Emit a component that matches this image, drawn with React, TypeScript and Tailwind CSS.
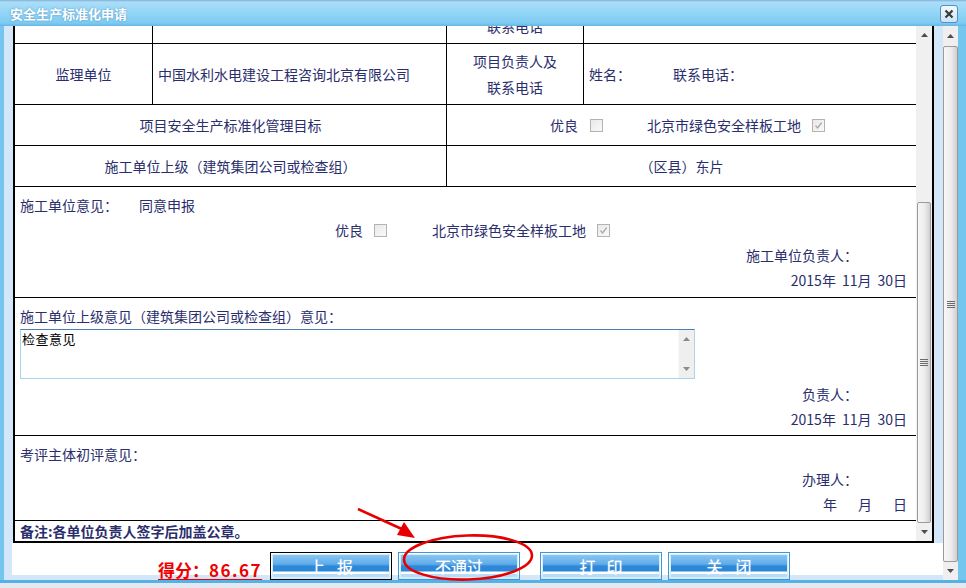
import React from "react";

const Box = ({ checked, className = "" }: { checked?: boolean; className?: string }) => (
  <span
    className={
      "inline-flex w-[13px] h-[13px] shrink-0 items-center justify-center border border-[#b3b3b3] bg-[linear-gradient(135deg,#e9e9e9,#f9f9f9)] " +
      className
    }
  >
    {checked && (
      <svg width="9" height="9" viewBox="0 0 9 9">
        <path d="M1.5 4.6 L3.6 7 L7.6 1.6" fill="none" stroke="#a8a8a8" strokeWidth="1.4" />
      </svg>
    )}
  </span>
);

const Up = ({ c = "#4d4d4d" }: { c?: string }) => (
  <svg width="7" height="4" viewBox="0 0 7 4">
    <path d="M0 4 L3.5 0 L7 4Z" fill={c} />
  </svg>
);
const Down = ({ c = "#4d4d4d" }: { c?: string }) => (
  <svg width="7" height="4" viewBox="0 0 7 4">
    <path d="M0 0 L3.5 4 L7 0Z" fill={c} />
  </svg>
);

const Grip = () => (
  <svg width="8" height="7" viewBox="0 0 8 7">
    <rect x="0" y="0" width="8" height="1" fill="#6b6b6b" />
    <rect x="0" y="2" width="8" height="1" fill="#6b6b6b" />
    <rect x="0" y="4" width="8" height="1" fill="#6b6b6b" />
    <rect x="0" y="6" width="8" height="1" fill="#6b6b6b" />
  </svg>
);

const Thumb = ({ className = "" }: { className?: string }) => (
  <div
    className={
      "rounded-[2px] border border-[#9a9a9a] bg-[linear-gradient(to_right,#f7f7f7,#ececec_55%,#cfcfcf)] flex items-center justify-center " +
      className
    }
  >
    <Grip />
  </div>
);

const DateText = () => (
  <div className="flex items-center gap-[6px]">
    <span>2015年</span>
    <span>11月</span>
    <span>30日</span>
  </div>
);

const Btn = ({ chars, dark, gap = "gap-[12px]" }: { chars: string[]; dark?: boolean; gap?: string }) => (
  <div
    className={
      "w-[122px] h-[28px] mt-[9px] border p-px " + (dark ? "border-black" : "border-[#3a98e0]")
    }
  >
    <div
      className={
        "w-full h-full flex items-center justify-center text-white text-[16px] leading-none border border-[#d9ecfb] bg-[linear-gradient(to_bottom,#8ac6f1_0%,#5eabea_42%,#2e8ad9_50%,#2a86d6_74%,#ffffff_76%,#ffffff_86%,#b8dbf6_88%,#b8dbf6_100%)] " +
        gap
      }
    >
      {chars.map((c, i) => (
        <span key={i} className="[text-shadow:0_0_1px_rgba(255,255,255,0.6)]">
          {c}
        </span>
      ))}
    </div>
  </div>
);

export default function App() {
  return (
    <div className="relative w-[966px] h-[588px] overflow-hidden bg-[#e3e9ee] font-['Noto_Sans_CJK_SC','Noto_Sans',sans-serif] text-[14px] text-[#2a2e6c]">
      <div className="flex flex-col h-[583px] bg-[#74c6ef] border-b-[3px] border-[#58b1e6]">
        {/* title bar */}
        <div className="h-[26px] flex items-center justify-between pl-[10px] pr-[8px] bg-[linear-gradient(to_bottom,#86aed3_0px,#aadef8_2px,#94d6f6_12px,#7ecbf2_23px,#63b6e4_26px)]">
          <span className="text-white font-bold text-[13px] leading-none [text-shadow:0_0_2px_rgba(40,100,160,0.6)]">
            安全生产标准化申请
          </span>
          <div className="mt-[2px] w-[18px] h-[18px] rounded-[3px] border border-[#5b8ebc] bg-[linear-gradient(to_bottom,#f1f9fe,#cbe5f6)] flex items-center justify-center">
            <svg width="10" height="10" viewBox="0 0 10 10">
              <path d="M1.5 1.5 L8.5 8.5 M8.5 1.5 L1.5 8.5" stroke="#3a3a3a" strokeWidth="2.2" />
            </svg>
          </div>
        </div>

        {/* main */}
        <div className="flex h-[554px]">
          <div className="w-[4px]" />
          <div className="w-[939px] flex flex-col bg-[#d4e7fa]">
            <div className="flex h-[517px]">
              <div className="w-[9px]" />
              <div className="w-[921px] border-x-2 border-b-2 border-black flex bg-white">
                {/* table viewport */}
                <div className="w-[901px] h-[515px] overflow-hidden">
                  <div className="-mt-[13px] flex flex-col">
                    {/* Row A */}
                    <div className="flex h-[31px] border-b border-black">
                      <div className="w-[138px] border-r border-black" />
                      <div className="w-[294px] border-r border-black" />
                      <div className="w-[137px] border-r border-black flex items-center justify-center pb-[4px]">
                        联系电话
                      </div>
                      <div className="flex-1" />
                    </div>
                    {/* Row B */}
                    <div className="flex h-[61px] border-b border-black">
                      <div className="w-[138px] border-r border-black flex items-center justify-center">监理单位</div>
                      <div className="w-[294px] border-r border-black flex items-center pl-[5px]">
                        中国水利水电建设工程咨询北京有限公司
                      </div>
                      <div className="w-[137px] border-r border-black flex flex-col items-center justify-center leading-[26px]">
                        <span>项目负责人及</span>
                        <span>联系电话</span>
                      </div>
                      <div className="flex-1 flex items-center pl-[5px]">
                        <span className="w-[84px]">姓名：</span>
                        <span>联系电话：</span>
                      </div>
                    </div>
                    {/* Row C */}
                    <div className="flex h-[41px] border-b border-black">
                      <div className="w-[432px] border-r border-black flex items-center justify-center">
                        项目安全生产标准化管理目标
                      </div>
                      <div className="flex-1 flex items-center pl-[103px]">
                        <span>优良</span>
                        <Box className="ml-[12px]" />
                        <span className="ml-[44px]">北京市绿色安全样板工地</span>
                        <Box checked className="ml-[11px]" />
                      </div>
                    </div>
                    {/* Row D */}
                    <div className="flex h-[41px] border-b border-black">
                      <div className="w-[432px] border-r border-black flex items-center justify-center">
                        施工单位上级（建筑集团公司或检查组）
                      </div>
                      <div className="flex-1 flex items-center justify-center">（区县）东片</div>
                    </div>
                    {/* Row E */}
                    <div className="flex flex-col h-[111px] border-b border-black pt-[6px] pl-[5px] pr-[9px]">
                      <div className="flex h-[25px] items-center">
                        <span className="w-[119px]">施工单位意见：</span>
                        <span>同意申报</span>
                      </div>
                      <div className="flex h-[25px] items-center pl-[315px]">
                        <span>优良</span>
                        <Box className="ml-[11px]" />
                        <span className="ml-[45px]">北京市绿色安全样板工地</span>
                        <Box checked className="ml-[11px]" />
                      </div>
                      <div className="flex h-[25px] items-center justify-end pr-[49px]">施工单位负责人：</div>
                      <div className="flex h-[25px] items-center justify-end">
                        <DateText />
                      </div>
                    </div>
                    {/* Row F */}
                    <div className="flex flex-col h-[138px] border-b border-black pt-[6px] pl-[5px] pr-[9px]">
                      <div className="flex h-[25px] items-center">施工单位上级意见（建筑集团公司或检查组）意见：</div>
                      <div className="w-[675px] h-[50px] border border-[#a9d4eb] border-t-[#4d7eb0] bg-white flex">
                        <div className="flex-1 pl-[1px] pt-[1px] text-black text-[13px] leading-[15px] tracking-[0.5px]">
                          检查意见
                        </div>
                        <div className="w-[16px] bg-[#efefef] border-l border-[#f7f7f7] flex flex-col items-center justify-between pt-[7px] pb-[7px]">
                          <Up c="#8a8a8a" />
                          <Down c="#8a8a8a" />
                        </div>
                      </div>
                      <div className="mt-[3px] flex h-[25px] items-center justify-end pr-[49px]">负责人：</div>
                      <div className="flex h-[25px] items-center justify-end">
                        <DateText />
                      </div>
                    </div>
                    {/* Row G */}
                    <div className="flex flex-col h-[85px] border-b border-black pt-[6px] pl-[5px] pr-[9px]">
                      <div className="flex h-[25px] items-center">考评主体初评意见：</div>
                      <div className="flex h-[25px] items-center justify-end pr-[49px]">办理人：</div>
                      <div className="flex h-[25px] items-center justify-end gap-[21px]">
                        <span>年</span>
                        <span>月</span>
                        <span>日</span>
                      </div>
                    </div>
                    {/* Row H */}
                    <div className="flex h-[20px] items-center pl-[5px] font-bold">
                      备注:各单位负责人签字后加盖公章。
                    </div>
                  </div>
                </div>
                {/* inner scrollbar */}
                <div className="w-[16px] h-[515px] flex flex-col bg-[#f0f0f0]">
                  <div className="h-[18px] flex items-center justify-center">
                    <Up />
                  </div>
                  <div className="h-[158px]" />
                  <Thumb className="h-[321px] mx-px" />
                  <div className="h-[18px] flex items-center justify-center">
                    <Down />
                  </div>
                </div>
              </div>
              <div className="w-[9px]" />
            </div>
            {/* button row */}
            <div className="flex h-[37px]">
              <div className="w-[8px]" />
              <div className="flex-1 flex items-start bg-[linear-gradient(to_bottom,#ffffff_32px,#d3e7f9_32px)]">
                <span className="ml-[146px] w-[112px] mt-[18px] text-[17px] leading-[18px] font-bold text-[#f00000] underline underline-offset-[2px]">
                  得分：<span className="tracking-[1.5px]">86.67</span>
                </span>
                <Btn chars={["上", "报"]} dark />
                <div className="ml-[6px]">
                  <Btn chars={["不通过"]} />
                </div>
                <div className="ml-[20px]">
                  <Btn chars={["打", "印"]} gap="gap-[11px]" />
                </div>
                <div className="ml-[6px]">
                  <Btn chars={["关", "闭"]} gap="gap-[13px]" />
                </div>
              </div>
            </div>
          </div>
          {/* outer scrollbar */}
          <div className="w-[15px] h-[554px] flex flex-col bg-[#efefef]">
            <div className="h-[20px] flex items-center justify-center">
              <Up />
            </div>
            <Thumb className="h-[516px]" />
            <div className="h-[18px] flex items-center justify-center">
              <Down />
            </div>
          </div>
          <div className="w-[8px]" />
        </div>
      </div>

      {/* red annotation overlay */}
      <svg className="absolute inset-0 pointer-events-none" width="966" height="588" viewBox="0 0 966 588">
        <ellipse cx="468" cy="557.5" rx="64" ry="22" fill="none" stroke="#e80000" strokeWidth="2.6" transform="rotate(-2 468 557.5)" />
        <line x1="358" y1="509" x2="404" y2="530" stroke="#e80000" strokeWidth="2.6" />
        <path d="M404 522 L397 535 L415 538 Z" fill="#e80000" />
      </svg>
    </div>
  );
}
